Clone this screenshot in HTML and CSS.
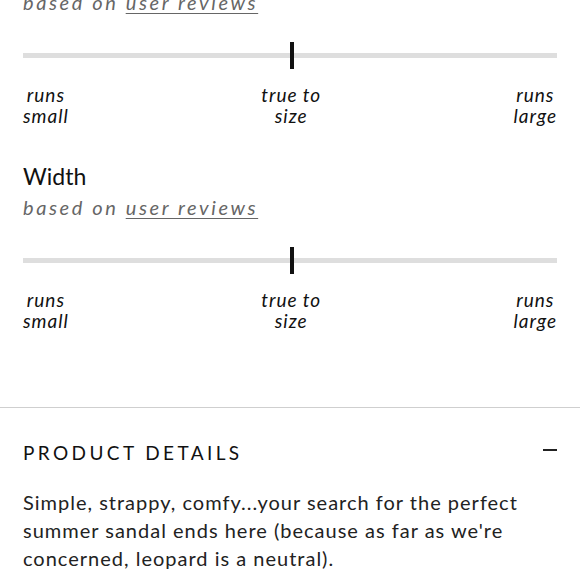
FILE: index.html
```html
<!DOCTYPE html>
<html lang="en">
<head>
<meta charset="utf-8">
<title>Fit</title>
<link rel="stylesheet" href="styles.css">
</head>
<body>
<div class="fit">
  <section class="fit-block">
    <h3 class="fit-title">Fit</h3>
    <p class="fit-sub">based on <a href="#" class="fit-link">user reviews</a></p>
    <div class="track">
      <div class="track-bar"></div>
      <div class="track-marker" style="left: 50%"></div>
    </div>
    <div class="labels">
      <span class="label">runs<br>small</span>
      <span class="label">true to<br>size</span>
      <span class="label">runs<br>large</span>
    </div>
  </section>
  <section class="fit-block">
    <h3 class="fit-title">Width</h3>
    <p class="fit-sub">based on <a href="#" class="fit-link">user reviews</a></p>
    <div class="track">
      <div class="track-bar"></div>
      <div class="track-marker" style="left: 50%"></div>
    </div>
    <div class="labels">
      <span class="label">runs<br>small</span>
      <span class="label">true to<br>size</span>
      <span class="label">runs<br>large</span>
    </div>
  </section>
</div>
<section class="details">
  <div class="details-head">
    <h2 class="details-title">PRODUCT DETAILS</h2>
    <span class="details-toggle"></span>
  </div>
  <p class="details-text">Simple, strappy, comfy...your search for the perfect summer sandal ends here (because as far as we're concerned, leopard is a neutral).</p>
</section>
</body>
</html>
```
FILE: styles.css
```css
html, body {
  margin: 0;
  padding: 0;
  background: #fff;
}
body {
  font-family: Lato, "Noto Sans", sans-serif;
  color: #111;
  width: 580px;
  overflow: hidden;
}
.fit {
  margin-top: -43px;
  padding: 0 23px;
}
.fit-block + .fit-block {
  margin-top: 36px;
}
.fit-title {
  margin: 0;
  font-size: 23px;
  font-weight: 400;
  line-height: 28px;
  color: #111;
}
.fit-sub {
  margin: 3px 0 0;
  font-size: 20px;
  line-height: 28px;
  font-style: italic;
  letter-spacing: 2.6px;
  color: #666;
}
.fit-link {
  color: #666;
  text-decoration: underline;
  text-underline-offset: 3px;
  text-decoration-thickness: 1px;
}
.track {
  position: relative;
  height: 28px;
  margin-top: 25px;
  display: flex;
  align-items: center;
}
.track-bar {
  flex: 1;
  height: 5px;
  background: #dedede;
}
.track-marker {
  position: absolute;
  top: 1px;
  width: 4px;
  height: 27px;
  margin-left: 0;
  background: #111;
}
.labels {
  display: flex;
  justify-content: space-between;
  margin-top: 15px;
}
.label {
  font-size: 19px;
  line-height: 21px;
  font-style: italic;
  letter-spacing: 1px;
  text-align: center;
  color: #111;
}
.details {
  margin-top: 76px;
  border-top: 1px solid #cfcfcf;
  padding: 33px 23px 0;
}
.details-head {
  display: flex;
  justify-content: space-between;
  align-items: center;
}
.details-title {
  margin: 0;
  font-size: 19px;
  line-height: 24px;
  font-weight: 400;
  letter-spacing: 3.4px;
  color: #111;
}
.details-toggle {
  width: 14px;
  height: 2px;
  background: #222;
  margin-top: -6px;
}
.details-text {
  margin: 23px 0 0;
  font-size: 20px;
  line-height: 28px;
  letter-spacing: 1px;
  color: #222;
}
```
